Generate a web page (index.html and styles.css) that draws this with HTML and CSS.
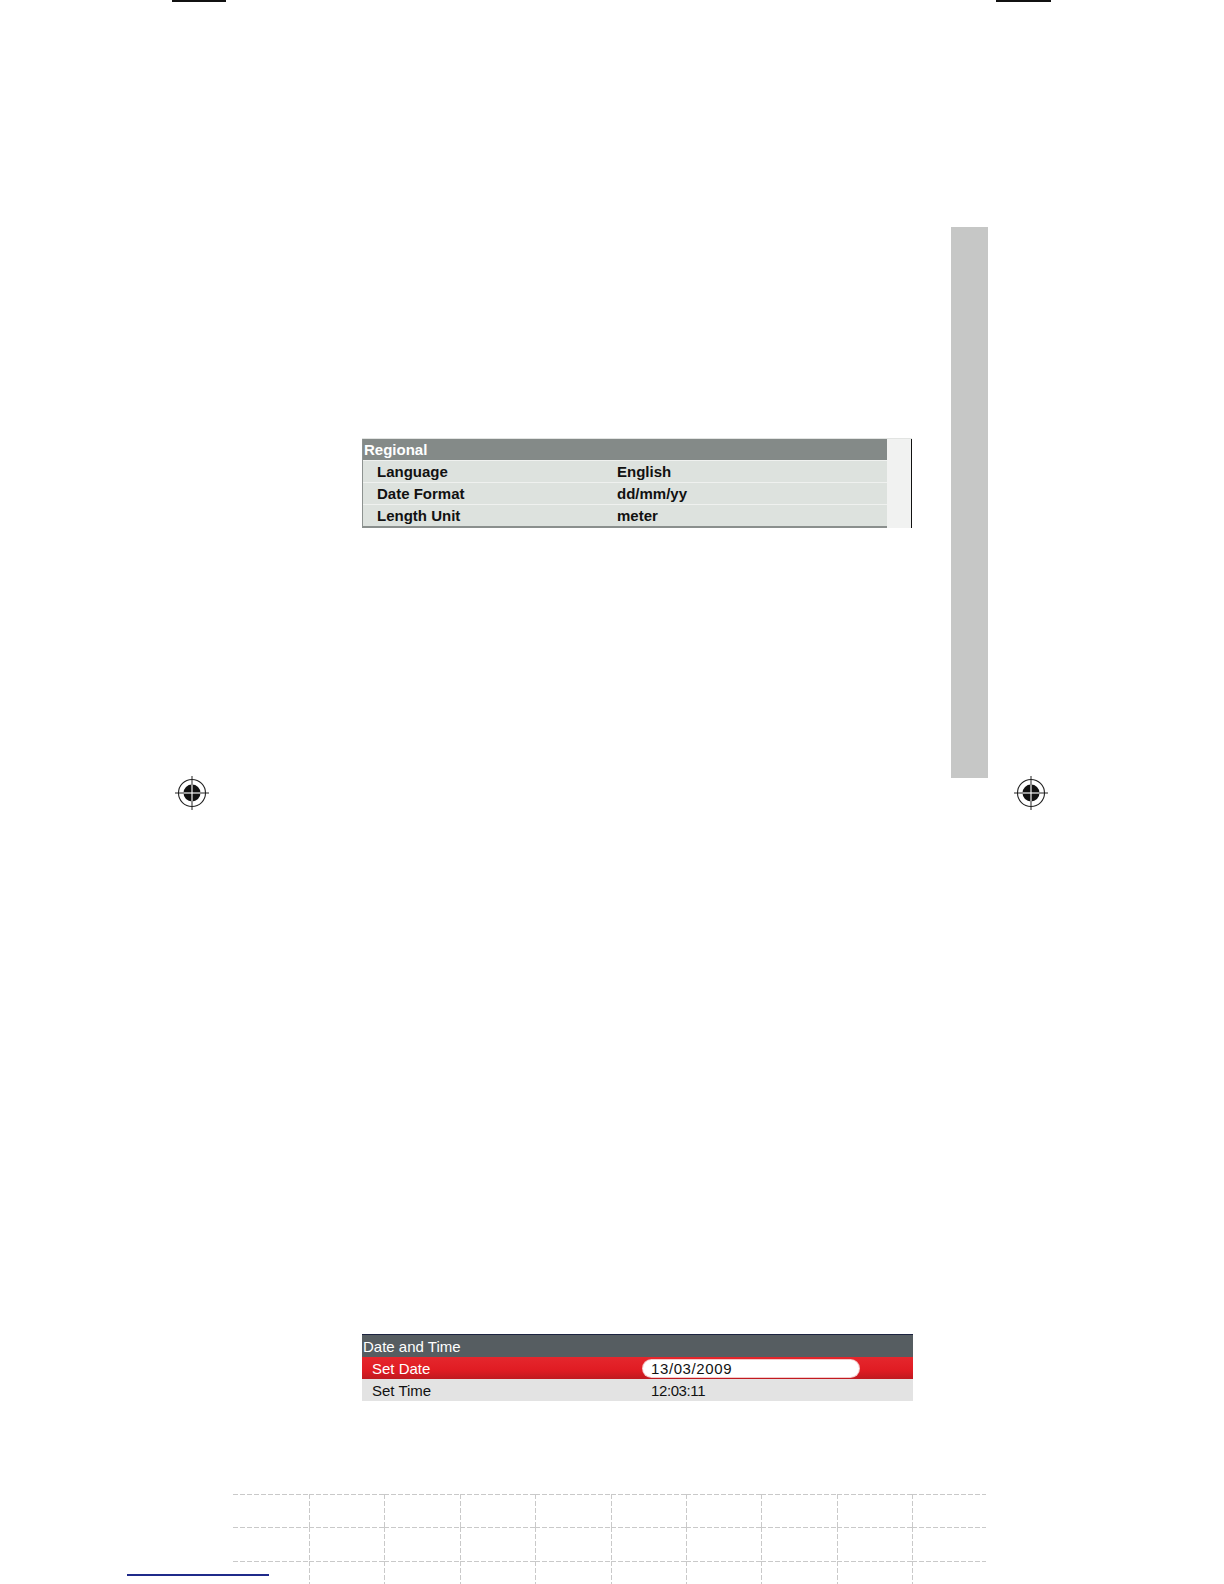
FILE: index.html
```html
<!DOCTYPE html>
<html lang="en">
<head>
<meta charset="utf-8">
<title>Regional / Date and Time</title>
<link rel="stylesheet" href="styles.css">
</head>
<body>
<div class="page">
  <div class="crop crop-left"></div>
  <div class="crop crop-right"></div>
  <div class="thumb-tab"></div>

  <svg class="regmark regmark-left" viewBox="0 0 40 40" width="40" height="40">
    <circle cx="20" cy="20" r="13.5" fill="none" stroke="#222" stroke-width="1.1"/>
    <circle cx="20" cy="20" r="8.5" fill="#111"/>
    <line x1="20" y1="3" x2="20" y2="37" stroke="#222" stroke-width="1"/>
    <line x1="3" y1="20" x2="37" y2="20" stroke="#222" stroke-width="1"/>
    <line x1="20" y1="11.5" x2="20" y2="28.5" stroke="#fff" stroke-width="1.1"/>
    <line x1="11.5" y1="20" x2="28.5" y2="20" stroke="#fff" stroke-width="1.1"/>
  </svg>
  <svg class="regmark regmark-right" viewBox="0 0 40 40" width="40" height="40">
    <circle cx="20" cy="20" r="13.5" fill="none" stroke="#222" stroke-width="1.1"/>
    <circle cx="20" cy="20" r="8.5" fill="#111"/>
    <line x1="20" y1="3" x2="20" y2="37" stroke="#222" stroke-width="1"/>
    <line x1="3" y1="20" x2="37" y2="20" stroke="#222" stroke-width="1"/>
    <line x1="20" y1="11.5" x2="20" y2="28.5" stroke="#fff" stroke-width="1.1"/>
    <line x1="11.5" y1="20" x2="28.5" y2="20" stroke="#fff" stroke-width="1.1"/>
  </svg>

  <div class="content">
    <div class="regional">
      <div class="reg-main">
        <div class="reg-head">Regional</div>
        <div class="reg-row"><span class="reg-label">Language</span><span class="reg-value">English</span></div>
        <div class="reg-row"><span class="reg-label">Date Format</span><span class="reg-value">dd/mm/yy</span></div>
        <div class="reg-row"><span class="reg-label">Length Unit</span><span class="reg-value">meter</span></div>
      </div>
      <div class="reg-side"></div>
    </div>

    <div class="datetime">
      <div class="dt-head">Date and Time</div>
      <div class="dt-row dt-active"><span class="dt-label">Set Date</span><span class="dt-field">13/03/2009</span></div>
      <div class="dt-row dt-normal"><span class="dt-label">Set Time</span><span class="dt-value">12:03:11</span></div>
    </div>
  </div>

  <div class="notes-grid">
    <div class="cell first"></div><div class="cell"></div><div class="cell"></div><div class="cell"></div><div class="cell"></div><div class="cell"></div><div class="cell"></div><div class="cell"></div><div class="cell"></div><div class="cell"></div>
    <div class="cell first"></div><div class="cell"></div><div class="cell"></div><div class="cell"></div><div class="cell"></div><div class="cell"></div><div class="cell"></div><div class="cell"></div><div class="cell"></div><div class="cell"></div>
    <div class="cell first"></div><div class="cell"></div><div class="cell"></div><div class="cell"></div><div class="cell"></div><div class="cell"></div><div class="cell"></div><div class="cell"></div><div class="cell"></div><div class="cell"></div>
  </div>

  <div class="blue-rule"></div>
</div>
</body>
</html>
```

FILE: styles.css
```css
html, body {
  margin: 0;
  padding: 0;
  background: #fff;
}

.page {
  position: relative;
  width: 1224px;
  height: 1584px;
  overflow: hidden;
  font-family: "Liberation Sans", Arial, sans-serif;
  color: #111;
}

/* print marks */
.crop {
  position: absolute;
  top: 0;
  height: 2px;
  background: #111;
}
.crop-left { left: 172px; width: 54px; }
.crop-right { left: 996px; width: 55px; }

.thumb-tab {
  position: absolute;
  left: 951px;
  top: 227px;
  width: 37px;
  height: 551px;
  background: #c6c7c6;
}

.regmark {
  position: absolute;
  top: 773px;
}
.regmark-left { left: 172px; }
.regmark-right { left: 1011px; }

.blue-rule {
  position: absolute;
  left: 127px;
  top: 1574px;
  width: 142px;
  height: 2px;
  background: #1f2a8a;
}

/* content column */
.content {
  padding-left: 362px;
  padding-top: 438px;
}

/* Regional table */
.regional {
  display: flex;
  width: 550px;
  border-top: 1px solid #e2e4e2;
}
.reg-main {
  width: 524px;
  border-left: 1px solid #8d9290;
  border-bottom: 2px solid #8a8f8d;
}
.reg-side {
  flex: 1;
  background: #f1f2f1;
  border-right: 1px solid #111;
}
.reg-head {
  height: 21px;
  line-height: 22px;
  background: #848a88;
  color: #fff;
  font-weight: bold;
  font-size: 15px;
  padding-left: 1px;
}
.reg-row {
  display: flex;
  height: 21px;
  line-height: 22px;
  background: #dde2de;
  border-top: 1px solid #eff1ef;
  font-weight: bold;
  font-size: 15px;
}
.reg-label {
  width: 240px;
  padding-left: 14px;
}

/* Date and Time table */
.datetime {
  width: 551px;
  margin-top: 806px;
  font-size: 15px;
}
.dt-head {
  height: 22px;
  line-height: 23px;
  border-top: 1px solid #1c2340;
  background: #565d61;
  color: #fff;
  padding-left: 1px;
}
.dt-row {
  display: flex;
  align-items: center;
  height: 22px;
}
.dt-active {
  background: linear-gradient(#e5272d, #e01c23 60%, #bf1a20);
  color: #fff;
}
.dt-normal {
  background: #e3e3e3;
  color: #111;
}
.dt-label {
  width: 271px;
  padding-left: 10px;
}
.dt-field {
  width: 208px;
  height: 17px;
  line-height: 18px;
  padding-left: 8px;
  background: #fff;
  color: #111;
  letter-spacing: 0.6px;
  border-radius: 9px;
  box-shadow: 0 0 0 1px #f4c8c8;
}
.dt-value {
  padding-left: 8px;
  letter-spacing: -0.4px;
}

/* dashed notes grid */
.notes-grid {
  display: grid;
  grid-template-columns: 76px repeat(8, 75.4px) 74px;
  grid-template-rows: 33px 34px 40px;
  margin-left: 233px;
  margin-top: 93px;
  width: 754px;
}
.cell {
  background:
    repeating-linear-gradient(to right, #c9c9c9 0 5px, transparent 5px 7px) top left / 100% 1px no-repeat,
    repeating-linear-gradient(to bottom, #c9c9c9 0 5px, transparent 5px 7px) top left / 1px 100% no-repeat;
}
.cell.first {
  background:
    repeating-linear-gradient(to right, #c9c9c9 0 5px, transparent 5px 7px) top left / 100% 1px no-repeat;
}
```
